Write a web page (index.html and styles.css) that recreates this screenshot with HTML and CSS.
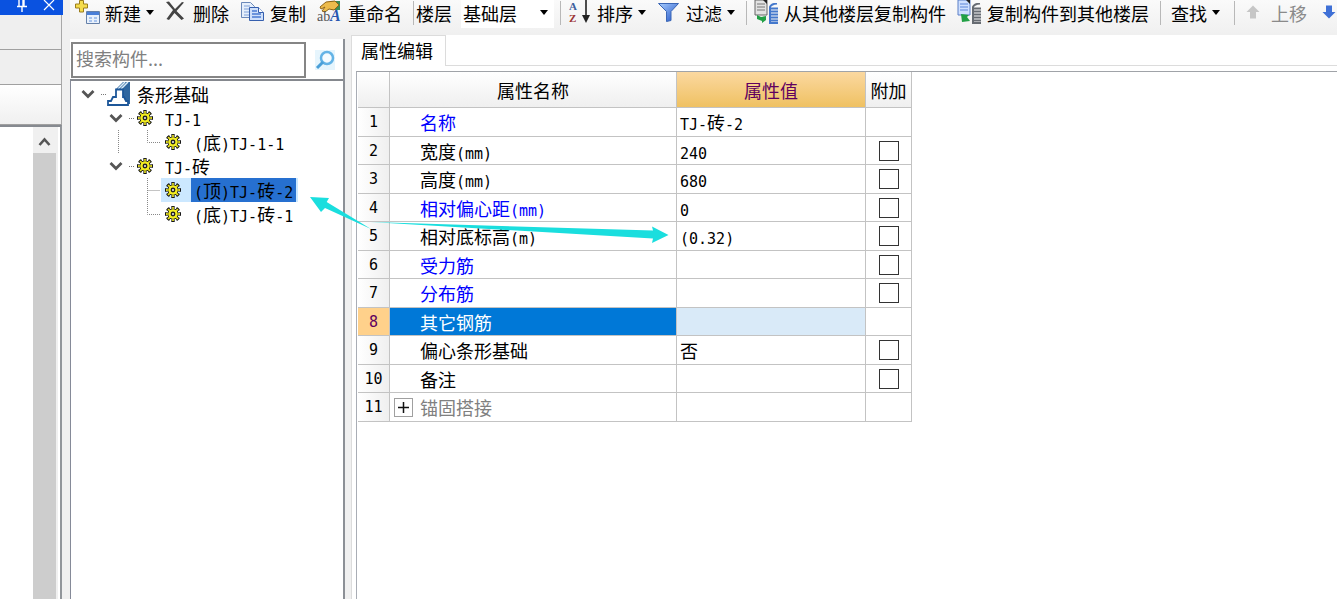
FILE: index.html
```
<!DOCTYPE html>
<html lang="zh-CN">
<head>
  <meta charset="utf-8">
  <title>属性编辑</title>
  <link rel="stylesheet" href="styles.css">
</head>
<body>

  <svg class="defs" width="0" height="0" aria-hidden="true">
    <defs>
      <linearGradient id="blue" x1="0" y1="0" x2="1" y2="1">
        <stop offset="0" stop-color="#a9ceff"/>
        <stop offset="1" stop-color="#1d50c4"/>
      </linearGradient>
      <symbol id="gear" viewBox="0 0 16 16">
        <circle cx="8" cy="8" r="6.200" fill="none" stroke="#111" stroke-width="3.600" pathLength="16" stroke-dasharray="1.300 .7" stroke-dashoffset=".65"/>
        <circle cx="8" cy="8" r="5.200" fill="#f4ee20" stroke="#222" stroke-width="1"/>
        <circle cx="8" cy="8" r="5.800" fill="none" stroke="#f4ee20" stroke-width="2.400" pathLength="16" stroke-dasharray=".7 1.300" stroke-dashoffset=".35"/>
        <circle cx="8" cy="8" r="1.700" fill="#fff" stroke="#222" stroke-width="1.500"/>
      </symbol>
      <symbol id="chevron" viewBox="0 0 14 10">
        <path d="M1.500 2l5.500 5.500L12.500 2" fill="none" stroke="#555" stroke-width="2.800"/>
      </symbol>
      <symbol id="updown" viewBox="0 0 14 14">
        <path d="M7 .5L13.500 7H10v6.500H4V7H.5z"/>
      </symbol>
      <symbol id="floors" viewBox="0 0 9 21">
        <path d="M1 4q1-3 7-3.500M1 3.500v17M0 5.500h9M0 8.500h9M0 11.500h9M0 14.500h9M0 17.500h9M0 20h9" fill="none" stroke-width="2"/>
      </symbol>
    </defs>
  </svg>

  <aside class="dock">
    <div class="dock-title">
      <svg width="14" height="14" viewBox="0 0 14 14"><path d="M4 0v6M9 0v6M8 0v6M2 6.500h10M7 7v5" fill="none" stroke="#fff" stroke-width="1.400"/></svg>
      <svg width="12" height="12" viewBox="0 0 12 12"><path d="M1 0l10 10M11 0L1 10" fill="none" stroke="#fff" stroke-width="1.200"/></svg>
    </div>
    <div class="dock-box"></div>
    <div class="dock-box"></div>
    <div class="dock-box light"></div>
    <div class="dock-list">
      <div class="scrollbar">
        <svg width="24" height="26" viewBox="0 0 24 26"><path d="M6.500 18l5-5.500 5 5.500" fill="none" stroke="#555" stroke-width="2.600"/></svg>
        <div class="thumb"></div>
      </div>
    </div>
  </aside>

  <main>
    <div class="toolbar">
      <button type="button">
        <svg width="25" height="26" viewBox="0 0 25 26">
          <path d="M4.500 .5h4v3.500h4v4h-4v4h-4V8h-4V4h4z" fill="#f5dc4c" stroke="#9a7d1c"/>
          <path d="M11.500 11.500h13v12h-13z" fill="#e9f1fc" stroke="#6580a8"/>
          <path d="M12 12h12v3H12z" fill="#4a7fd8"/>
          <path d="M14 17h3v2h-3zM19 17h3v2h-3zM14 20h3v2h-3zM19 20h3v2h-3z" fill="#a8c4ee"/>
        </svg>新建<i class="caret"></i></button>
      <button type="button">
        <svg width="23" height="26" viewBox="0 0 23 26"><path d="M1 2l3-.5 6 7.500 7-7 2 .5-7.500 8.500 7.500 7.500-2.500 1.500-7-7L4 20l-2.500-1L8 10z" fill="#444"/></svg>删除</button>
      <button type="button">
        <svg width="25" height="26" viewBox="0 0 25 26">
          <path d="M1.500 2.500h9l4 4v11h-13z" fill="#e6effb" stroke="#6b89b9"/>
          <path d="M4 6h6M4 9h8M4 12h8M4 15h5" stroke="#7fa0d8"/>
          <path d="M9.500 7.500h9l5 5v8h-14z" fill="#cfe0fa" stroke="#355fae"/>
          <path d="M18.500 7.500v5h5" fill="#fff" stroke="#355fae"/>
          <path d="M12 11h5M12 14h9M12 17h9" stroke="#4b7bd2" stroke-width="1.500"/>
        </svg>复制</button>
      <button type="button">
        <svg width="26" height="26" viewBox="0 0 26 26">
          <path d="M14 1h9v9h-9z" fill="#3c8b57"/>
          <path d="M3 7l6-5 9-1 4 4-5 5-5-1-4 3-3-1 3-4-4 2z" fill="#edbb4c" stroke="#8f6418"/>
          <text x="0" y="21" font-family="Liberation Serif" font-size="14" fill="#555">ab</text>
          <text x="13" y="21" font-family="Liberation Serif" font-size="16" font-weight="bold" font-style="italic" fill="#2857b0">A</text>
        </svg>重命名</button>
      <span class="sep"></span>
      <label for="floor">楼层</label>
      <div class="select">
        <select id="floor"><option>基础层</option></select>
        <i class="caret"></i>
      </div>
      <span class="sep"></span>
      <button type="button">
        <svg width="24" height="26" viewBox="0 0 24 26">
          <text x="1" y="10" font-family="Liberation Serif" font-size="11" font-weight="bold" fill="#3d5f9e">A</text>
          <text x="1" y="22" font-family="Liberation Serif" font-size="11" font-weight="bold" fill="#9c3434">Z</text>
          <path d="M18 0v17" stroke="#222" stroke-width="1.600"/><path d="M14 15h8l-4 8z" fill="#222"/>
        </svg>排序<i class="caret"></i></button>
      <button type="button">
        <svg width="24" height="26" viewBox="0 0 24 26"><path d="M1.500 3.500h20l-7.500 8v9l-4.500 1v-10z" fill="url(#blue)" stroke="#3b66b5"/></svg>过滤<i class="caret"></i></button>
      <span class="sep"></span>
      <button type="button">
        <svg width="25" height="26" viewBox="0 0 25 26">
          <path d="M1 0h12v15H1z" fill="#e3e3e3" stroke="#666"/><path d="M3 4h8M3 7h8M3 10h8" stroke="#777"/><path d="M9 0h4v4z" fill="#222"/>
          <path d="M3 15l4 2 5-1v4l-4 3v-2l-5-2z" fill="#22a046"/>
          <use href="#floors" x="15" y="3" width="9" height="21" stroke="#4478cc"/>
        </svg>从其他楼层复制构件</button>
      <button type="button">
        <svg width="25" height="26" viewBox="0 0 25 26">
          <path d="M1 0h12v15H1z" fill="#cfe0ff" stroke="#5a7fc7"/><path d="M3 4h8M3 7h8M3 10h8" stroke="#5c86d8"/><path d="M9 0h4v4z" fill="#222"/>
          <path d="M4 14l8 1-2 2 3 4-8 1z" fill="#22a046"/>
          <use href="#floors" x="15" y="3" width="9" height="21" stroke="#666b72"/>
        </svg>复制构件到其他楼层</button>
      <span class="sep"></span>
      <button type="button" class="find">查找<i class="caret"></i></button>
      <span class="sep"></span>
      <button type="button" disabled>
        <svg width="24" height="26" viewBox="0 0 24 26"><use href="#updown" x="4" y="5" width="14" height="14" fill="#c6c6c6"/></svg>上移</button>
      <button type="button" aria-label="下移">
        <svg width="24" height="26" viewBox="0 0 24 26"><g transform="rotate(180 11 12)"><use href="#updown" x="4" y="5" width="14" height="14" fill="#3f70d6"/></g></svg></button>
    </div>

    <div class="content">
      <section class="browser">
        <div class="search">
          <input type="text" placeholder="搜索构件..." aria-label="搜索构件">
          <button type="button" aria-label="搜索">
            <svg width="20" height="20" viewBox="0 0 20 20"><path d="M0 0h20v20H0z" fill="#e6f5fd"/><circle cx="12" cy="8" r="6" fill="#f4fbff" stroke="#63b3e6" stroke-width="2.500"/><path d="M8 12l-6 6" stroke="#4a9fd8" stroke-width="3"/></svg>
          </button>
        </div>
        <ul class="tree">
          <li>
            <div class="row">
              <svg class="chev" width="14" height="10"><use href="#chevron"/></svg><i class="dots"></i>
              <svg width="24" height="24" viewBox="0 0 24 24">
                <path d="M9 7l7-7h7v22h-4l-3-7V7z" fill="#2f669f"/>
                <path d="M11 7l7-7M14 7l7-7" stroke="#dcecf8" stroke-width="1.500"/>
                <path d="M9 7.500h7v7.500h1l2 4h2v4H1v-4h3l2-4h3z" fill="#fff" stroke="#1d5799" stroke-width="1.800"/>
              </svg>
              <span class="name">条形基础</span>
            </div>
            <ul>
              <li>
                <div class="row">
                  <svg class="chev" width="14" height="10"><use href="#chevron"/></svg><i class="dots"></i>
                  <svg class="gear" width="16" height="16"><use href="#gear"/></svg>
                  <span class="name"><b>TJ-1</b></span>
                </div>
                <ul>
                  <li class="row leaf">
                    <svg width="56" height="24"><path d="M14.500 0v24M43.500 0v12.500h13" class="dotted"/></svg>
                    <span class="item"><svg class="gear" width="16" height="16"><use href="#gear"/></svg><span class="name"><b>(</b>底<b>)TJ-1-1</b></span></span>
                  </li>
                </ul>
              </li>
              <li>
                <div class="row">
                  <svg class="chev" width="14" height="10"><use href="#chevron"/></svg><i class="dots"></i>
                  <svg class="gear" width="16" height="16"><use href="#gear"/></svg>
                  <span class="name"><b>TJ-</b>砖</span>
                </div>
                <ul>
                  <li class="row leaf selected">
                    <svg width="56" height="24"><path d="M43.500 0v24M43.500 12.500h13" class="dotted"/></svg>
                    <span class="item"><svg class="gear" width="16" height="16"><use href="#gear"/></svg><span class="name"><b>(</b>顶<b>)TJ-</b>砖<b>-2</b></span></span>
                  </li>
                  <li class="row leaf">
                    <svg width="56" height="24"><path d="M43.500 0v12.500h13" class="dotted"/></svg>
                    <span class="item"><svg class="gear" width="16" height="16"><use href="#gear"/></svg><span class="name"><b>(</b>底<b>)TJ-</b>砖<b>-1</b></span></span>
                  </li>
                </ul>
              </li>
            </ul>
          </li>
        </ul>
      </section>

      <section class="editor">
        <div class="tabs"><button type="button" class="tab">属性编辑</button></div>
        <div class="sheet">
          <table>
            <colgroup><col class="c-num"><col class="c-name"><col class="c-value"><col class="c-add"></colgroup>
            <thead>
              <tr><th></th><th>属性名称</th><th class="active">属性值</th><th>附加</th></tr>
            </thead>
            <tbody>
              <tr><th>1</th><td class="key">名称</td><td><b>TJ-</b>砖<b>-2</b></td><td></td></tr>
              <tr><th>2</th><td>宽度<b>(mm)</b></td><td><b>240</b></td><td><input type="checkbox" aria-label="宽度 附加"></td></tr>
              <tr><th>3</th><td>高度<b>(mm)</b></td><td><b>680</b></td><td><input type="checkbox" aria-label="高度 附加"></td></tr>
              <tr><th>4</th><td class="key">相对偏心距<b>(mm)</b></td><td><b>0</b></td><td><input type="checkbox" aria-label="相对偏心距 附加"></td></tr>
              <tr><th>5</th><td>相对底标高<b>(m)</b></td><td><b>(0.32)</b></td><td><input type="checkbox" aria-label="相对底标高 附加"></td></tr>
              <tr><th>6</th><td class="key">受力筋</td><td></td><td><input type="checkbox" aria-label="受力筋 附加"></td></tr>
              <tr><th>7</th><td class="key">分布筋</td><td></td><td><input type="checkbox" aria-label="分布筋 附加"></td></tr>
              <tr class="current"><th>8</th><td>其它钢筋</td><td></td><td></td></tr>
              <tr><th>9</th><td>偏心条形基础</td><td>否</td><td><input type="checkbox" aria-label="偏心条形基础 附加"></td></tr>
              <tr><th>10</th><td>备注</td><td></td><td><input type="checkbox" aria-label="备注 附加"></td></tr>
              <tr class="group"><th>11</th><td><div><button type="button" aria-label="展开"><svg width="11" height="11"><path d="M0 5.500h11M5.500 0v11" stroke="#111" stroke-width="1.500"/></svg></button>锚固搭接</div></td><td></td><td></td></tr>
            </tbody>
          </table>
        </div>
      </section>
    </div>
  </main>

  <!-- arrows linking the tree item with its elevation value -->
  <svg class="arrows" width="400" height="80" viewBox="300 180 400 80">
    <path d="M310 197l19 1-2.300 4 44.300 27-46-21-4 4z"/>
    <path d="M370.500 222l282.500 8.500-1-4 16.500 8.500-16.500 8 1-4.500z"/>
  </svg>

</body>
</html>
```
FILE: styles.css
```
* { box-sizing: border-box; }

body {
  display: flex;
  height: 100vh;
  margin: 0;
  overflow: hidden;
  background: #f0f0f0;
  color: #000;
  font: 18px/24px "Noto Sans CJK SC", sans-serif;
}

button, input, select {
  font: inherit;
  color: inherit;
}

svg { flex: none; }
.defs { position: absolute; }

/* half-width characters are half of a full-width one */
b, tbody th {
  font: 15px/16px "DejaVu Sans Mono", monospace;
}

ul {
  margin: 0;
  padding: 0;
  list-style: none;
}

/* left dock */
.dock {
  flex: none;
  display: flex;
  flex-direction: column;
  width: 63px;
}

.dock-title {
  display: flex;
  justify-content: flex-end;
  gap: 14px;
  height: 15px;
  padding-right: 8px;
  background: #0a52e0;
}

.dock-box {
  height: 35px;
  margin-right: 1px;
  border-right: 1px solid #a8a8a8;
  border-bottom: 1px solid #a0a0a0;
  background: #efefef;
}
.dock-box.light {
  height: 40px;
  background: linear-gradient(#fff, #f0f0f0);
}

.dock-list {
  flex: 1;
  display: flex;
  justify-content: flex-end;
  margin-right: 1px;
  padding-right: 2px;
  border-top: 2px solid #868a90;
  border-right: 2px solid #92969b;
  background: #fff;
}

.scrollbar {
  display: flex;
  flex-direction: column;
  width: 25px;
  background: #f0f0f0;
}
.scrollbar .thumb {
  flex: 1;
  margin-right: 2px;
  background: #cdcdcd;
}

main {
  flex: 1;
  display: flex;
  flex-direction: column;
  min-width: 0;
  padding-left: 7px;
}

/* toolbar */
.toolbar {
  flex: none;
  display: flex;
  align-items: center;
  gap: 1px;
  height: 34px;
  padding-bottom: 9px;
  overflow: hidden;
  background: linear-gradient(#fafafa, #f0f0f0);
  white-space: nowrap;
}

.toolbar button {
  flex: none;
  display: flex;
  align-items: center;
  gap: 5px;
  padding: 0 5px;
  border: 0;
  background: none;
}
.toolbar button:disabled { color: #8a8a8a; }
.toolbar .find { padding: 0 8px; }

.caret {
  border: 4px solid transparent;
  border-top: 5px solid #000;
  border-bottom: 0;
}

.sep {
  flex: none;
  width: 1px;
  height: 24px;
  margin: 0 1px 0 5px;
  background: #b8b8b8;
}

.select {
  flex: none;
  display: flex;
  align-items: center;
  width: 93px;
  height: 30px;
  margin-left: 8px;
  padding-right: 6px;
  background: #fff;
}
.select select {
  flex: 1;
  padding: 0 2px;
  border: 0;
  background: none;
  appearance: none;
}

.content {
  flex: 1;
  display: flex;
  min-height: 0;
}

/* component browser */
.browser {
  flex: none;
  display: flex;
  flex-direction: column;
  width: 275px;
  margin-top: 5px;
  border-right: 2px solid #8c9096;
}

.search {
  display: flex;
  padding: 3px 0 1px 1px;
  background: #fff;
}
.search input {
  width: 235px;
  height: 36px;
  padding: 0 3px 4px;
  border: 2px solid #858585;
  background: #fff;
}
.search input::placeholder { color: #808080; }
.search button {
  flex: 1;
  display: flex;
  align-items: center;
  justify-content: center;
  padding: 0;
  border: 0;
  background: #fff;
}

.tree {
  flex: 1;
  padding: 1px 0 0 10px;
  border-top: 2px solid #85888e;
  border-left: 1px solid #858a98;
  background: #fff;
}
.tree li ul .row { padding-left: 28px; }
.tree li ul .leaf { padding-left: 23px; }

.row {
  display: flex;
  align-items: center;
  height: 24px;
  white-space: nowrap;
}
.row .name { padding-left: 6px; }
.row .gear + .name { padding-left: 12px; }

.dots {
  width: 5px;
  margin: 0 1px 0 6px;
  border-top: 1px dotted #777;
}
.row .gear { margin-left: 2px; }

.dotted {
  fill: none;
  stroke: #888;
  stroke-dasharray: 1 1;
}

.item {
  display: flex;
  align-items: center;
  padding-right: 2px;
  margin-left: 1px;
}
.item .gear { margin-left: 4px; }
.row .item .gear + .name {
  margin-left: 10px;
  padding: 0 3px;
}
.selected .item { background: #cce8ff; }
.selected .name { background: #2670d0; }

/* property editor */
.editor {
  flex: 1;
  display: flex;
  flex-direction: column;
  min-width: 0;
  margin: 1px 0 0 6px;
  border-left: 1px solid #dcdcdc;
  background: #fff;
}

.tabs {
  display: flex;
  height: 31px;
  border-bottom: 1px solid #dcdcdc;
}
.tab {
  height: 31px;
  padding: 0 12px 2px 9px;
  border: 1px solid #dcdcdc;
  border-bottom: 0;
  border-left: 0;
  background: #fff;
}

.sheet {
  flex: 1;
  margin: 5px 0 0 4px;
  padding-left: 1px;
  border-top: 1px solid #a0a3a8;
  border-left: 1px solid #a9adb5;
}

table {
  width: 554px;
  table-layout: fixed;
  border-spacing: 0;
}
.c-num { width: 32px; }
.c-name { width: 287px; }
.c-value { width: 189px; }
.c-add { width: 46px; }

th, td {
  padding: 0;
  border-right: 1px solid #c3c3c3;
  border-bottom: 1px solid #c3c3c3;
  white-space: nowrap;
}

thead th {
  height: 36px;
  background: linear-gradient(#fff, #efefef);
  font-weight: normal;
}
thead .active {
  background: linear-gradient(#fbd8a0, #efc162);
  color: #600060;
}

tbody tr { height: 28px; }
tbody tr:nth-child(odd) { height: 29px; }
tbody th { background: linear-gradient(90deg, #fff, #efefef); }
td:nth-child(2) { padding-left: 30px; }
td:nth-child(3) { padding-left: 3px; }
td:nth-child(4) { text-align: center; }
.key { color: #00f; }

td input {
  display: block;
  width: 20px;
  height: 20px;
  margin: 0 auto;
  border: 1px solid #333;
  background: #fff;
  appearance: none;
}

.current th {
  background: #ffd18b;
  color: #600060;
}
.current td:nth-child(2) {
  background: #0078d7;
  color: #fff;
}
.current td:nth-child(3) { background: #d9eaf8; }

.group td { color: #808080; }
.group td:nth-child(2) { padding-left: 4px; }
.group div {
  display: flex;
  align-items: center;
  gap: 7px;
}
.group button {
  display: flex;
  align-items: center;
  justify-content: center;
  width: 19px;
  height: 19px;
  padding: 0;
  border: 1px solid #a0a0a0;
  background: #fff;
}

.arrows {
  position: absolute;
  top: 180px;
  left: 300px;
  fill: #1adede;
  pointer-events: none;
}
```
